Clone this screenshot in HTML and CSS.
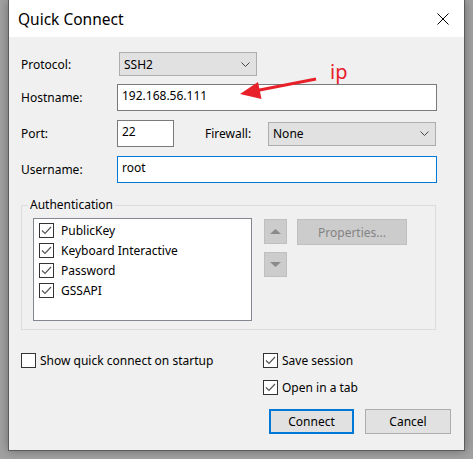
FILE: index.html
```html
<!DOCTYPE html>
<html>
<head>
<meta charset="utf-8">
<link rel="stylesheet" href="styles.css">
</head>
<body>
<div class="window">
  <div class="titlebar">
    <span class="title">Quick Connect</span>
    <svg class="close" width="12" height="12" viewBox="0 0 12 12"><path d="M0.5 0.5 L11.5 11.5 M11.5 0.5 L0.5 11.5" stroke="#000" stroke-width="1" fill="none"/></svg>
  </div>
  <div class="content">
    <div class="row row-protocol">
      <span class="label">Protocol:</span>
      <div class="select sel-proto"><span>SSH2</span><svg class="chev" width="9" height="5" viewBox="0 0 9 5"><path d="M0.5 0.5 L4.5 4.5 L8.5 0.5" stroke="#444" fill="none"/></svg></div>
    </div>
    <div class="row row-field">
      <span class="label">Hostname:</span>
      <div class="input wide">192.168.56.111</div>
    </div>
    <div class="row row-field">
      <span class="label">Port:</span>
      <div class="input port">22</div>
      <span class="label fw">Firewall:</span>
      <div class="select sel-fw"><span>None</span><svg class="chev" width="9" height="5" viewBox="0 0 9 5"><path d="M0.5 0.5 L4.5 4.5 L8.5 0.5" stroke="#444" fill="none"/></svg></div>
    </div>
    <div class="row row-field">
      <span class="label">Username:</span>
      <div class="input wide focus">root</div>
    </div>

    <fieldset class="group">
      <legend>Authentication</legend>
      <div class="group-inner">
        <div class="list">
          <div class="item"><svg class="cb" width="15" height="15" viewBox="0 0 15 15"><rect x="0.5" y="0.5" width="14" height="14" fill="#fff" stroke="#333"/><path d="M3 7.5 L6 10.5 L12 4" fill="none" stroke="#555" stroke-width="1.2"/></svg><span>PublicKey</span></div>
          <div class="item"><svg class="cb" width="15" height="15" viewBox="0 0 15 15"><rect x="0.5" y="0.5" width="14" height="14" fill="#fff" stroke="#333"/><path d="M3 7.5 L6 10.5 L12 4" fill="none" stroke="#555" stroke-width="1.2"/></svg><span>Keyboard Interactive</span></div>
          <div class="item"><svg class="cb" width="15" height="15" viewBox="0 0 15 15"><rect x="0.5" y="0.5" width="14" height="14" fill="#fff" stroke="#333"/><path d="M3 7.5 L6 10.5 L12 4" fill="none" stroke="#555" stroke-width="1.2"/></svg><span>Password</span></div>
          <div class="item"><svg class="cb" width="15" height="15" viewBox="0 0 15 15"><rect x="0.5" y="0.5" width="14" height="14" fill="#fff" stroke="#333"/><path d="M3 7.5 L6 10.5 L12 4" fill="none" stroke="#555" stroke-width="1.2"/></svg><span>GSSAPI</span></div>
        </div>
        <div class="arrows">
          <div class="btn-dis arrow"><svg width="11" height="5" viewBox="0 0 11 5"><path d="M5.5 0 L11 5 L0 5 Z" fill="#8a8a8a"/></svg></div>
          <div class="btn-dis arrow"><svg width="11" height="5" viewBox="0 0 11 5"><path d="M0 0 L11 0 L5.5 5 Z" fill="#8a8a8a"/></svg></div>
        </div>
        <div class="btn-dis props">Properties...</div>
      </div>
    </fieldset>

    <div class="options">
      <div class="opt"><svg class="cb" width="15" height="15" viewBox="0 0 15 15"><rect x="0.5" y="0.5" width="14" height="14" fill="#fff" stroke="#333"/></svg><span>Show quick connect on startup</span></div>
      <div class="opt"><svg class="cb" width="15" height="15" viewBox="0 0 15 15"><rect x="0.5" y="0.5" width="14" height="14" fill="#fff" stroke="#333"/><path d="M3 7.5 L6 10.5 L12 4" fill="none" stroke="#555" stroke-width="1.2"/></svg><span>Save session</span></div>
      <div class="opt empty"></div>
      <div class="opt"><svg class="cb" width="15" height="15" viewBox="0 0 15 15"><rect x="0.5" y="0.5" width="14" height="14" fill="#fff" stroke="#333"/><path d="M3 7.5 L6 10.5 L12 4" fill="none" stroke="#555" stroke-width="1.2"/></svg><span>Open in a tab</span></div>
    </div>

    <div class="buttons">
      <div class="btn default">Connect</div>
      <div class="btn">Cancel</div>
    </div>
  </div>
</div>
<svg class="annot" width="473" height="459" viewBox="0 0 473 459">
  <line x1="316" y1="79" x2="252" y2="91.5" stroke="#e8202a" stroke-width="3"/>
  <path d="M240 94 L258 82 L261.5 99 Z" fill="#e8202a"/>
  <text x="330" y="79" class="ip">ip</text>
</svg>
</body>
</html>
```
FILE: styles.css
```css
* { box-sizing: border-box; }
html, body { margin: 0; padding: 0; }
body {
  position: relative;
  width: 473px;
  height: 459px;
  overflow: hidden;
  background: #a2a2a2;
  font-family: "Noto Sans", sans-serif;
  font-size: 12px;
  color: #000;
}
.window {
  margin-left: 8px;
  width: 457px;
  height: 451px;
  background: #f0f0f0;
  border: 1px solid #5b5b5b;
  border-top: none;
  box-shadow: 0 0 10px rgba(0,0,0,0.35);
  display: flex;
  flex-direction: column;
}
.titlebar {
  height: 37px;
  background: #fff;
  display: flex;
  align-items: center;
  padding-left: 9px;
  flex-shrink: 0;
}
.title { font-size: 15.5px; }
.close { margin-left: auto; margin-right: 15px; }

.content { padding: 15px 0 0 12px; }

.row { display: flex; align-items: center; }
.row-protocol { height: 24px; }
.row-field { height: 27px; margin-top: 9px; }
.row-protocol + .row-field { margin-top: 8px; }
.label { width: 96px; flex-shrink: 0; }
.label.fw { width: 63px; margin-left: 31px; }

.select {
  height: 24px;
  background: #e1e1e1;
  border: 1px solid #adadad;
  display: flex;
  align-items: center;
  padding: 0 6px 0 4px;
}
.select .chev { margin-left: auto; }
.sel-proto { width: 138px; margin-left: 2px; }
.sel-fw { width: 168px; }

.input {
  height: 27px;
  background: #fff;
  border: 1px solid #7a7a7a;
  display: flex;
  align-items: center;
  padding: 0 0 4px 4px;
}
.input.wide { width: 320px; }
.input.port { width: 57px; }
.input.focus { border-color: #0078d7; }

.group {
  margin: 14px 0 0 0;
  width: 415px;
  padding: 5px 0 8px 11px;
  border: 1px solid #dcdcdc;
  min-width: 0;
}
.group legend {
  padding: 0 2px;
  margin-left: -5px;
  line-height: 16px;
}
.group-inner { display: flex; align-items: flex-start; }
.list {
  width: 219px;
  height: 103px;
  background: #fff;
  border: 1px solid #828790;
  padding: 1px 0 0 5px;
}
.item { height: 20px; display: flex; align-items: center; gap: 7px; }
.cb { flex-shrink: 0; display: block; }

.btn-dis {
  background: #cccccc;
  border: 1px solid #bfbfbf;
  color: #838383;
  display: flex;
  align-items: center;
  justify-content: center;
}
.arrows { margin: 1px 0 0 12px; display: flex; flex-direction: column; gap: 8px; }
.arrow { width: 23px; height: 25px; }
.props { margin: 1px 0 0 10px; width: 110px; height: 26px; }

.options {
  margin-top: 23px;
  display: grid;
  grid-template-columns: 242px auto;
  grid-auto-rows: 15px;
  row-gap: 12px;
}
.opt { display: flex; align-items: center; gap: 4px; white-space: nowrap; }

.buttons {
  margin-top: 14px;
  display: flex;
  justify-content: flex-end;
  gap: 11px;
  padding-right: 13px;
}
.btn {
  width: 86px;
  height: 25px;
  background: #e1e1e1;
  border: 1px solid #adadad;
  display: flex;
  align-items: center;
  justify-content: center;
}
.btn.default { width: 85px; border: 2px solid #0078d7; }

.annot { position: absolute; left: 0; top: 0; pointer-events: none; }
.ip { font-family: "Noto Sans", sans-serif; font-size: 20px; fill: #e8202a; }
```
